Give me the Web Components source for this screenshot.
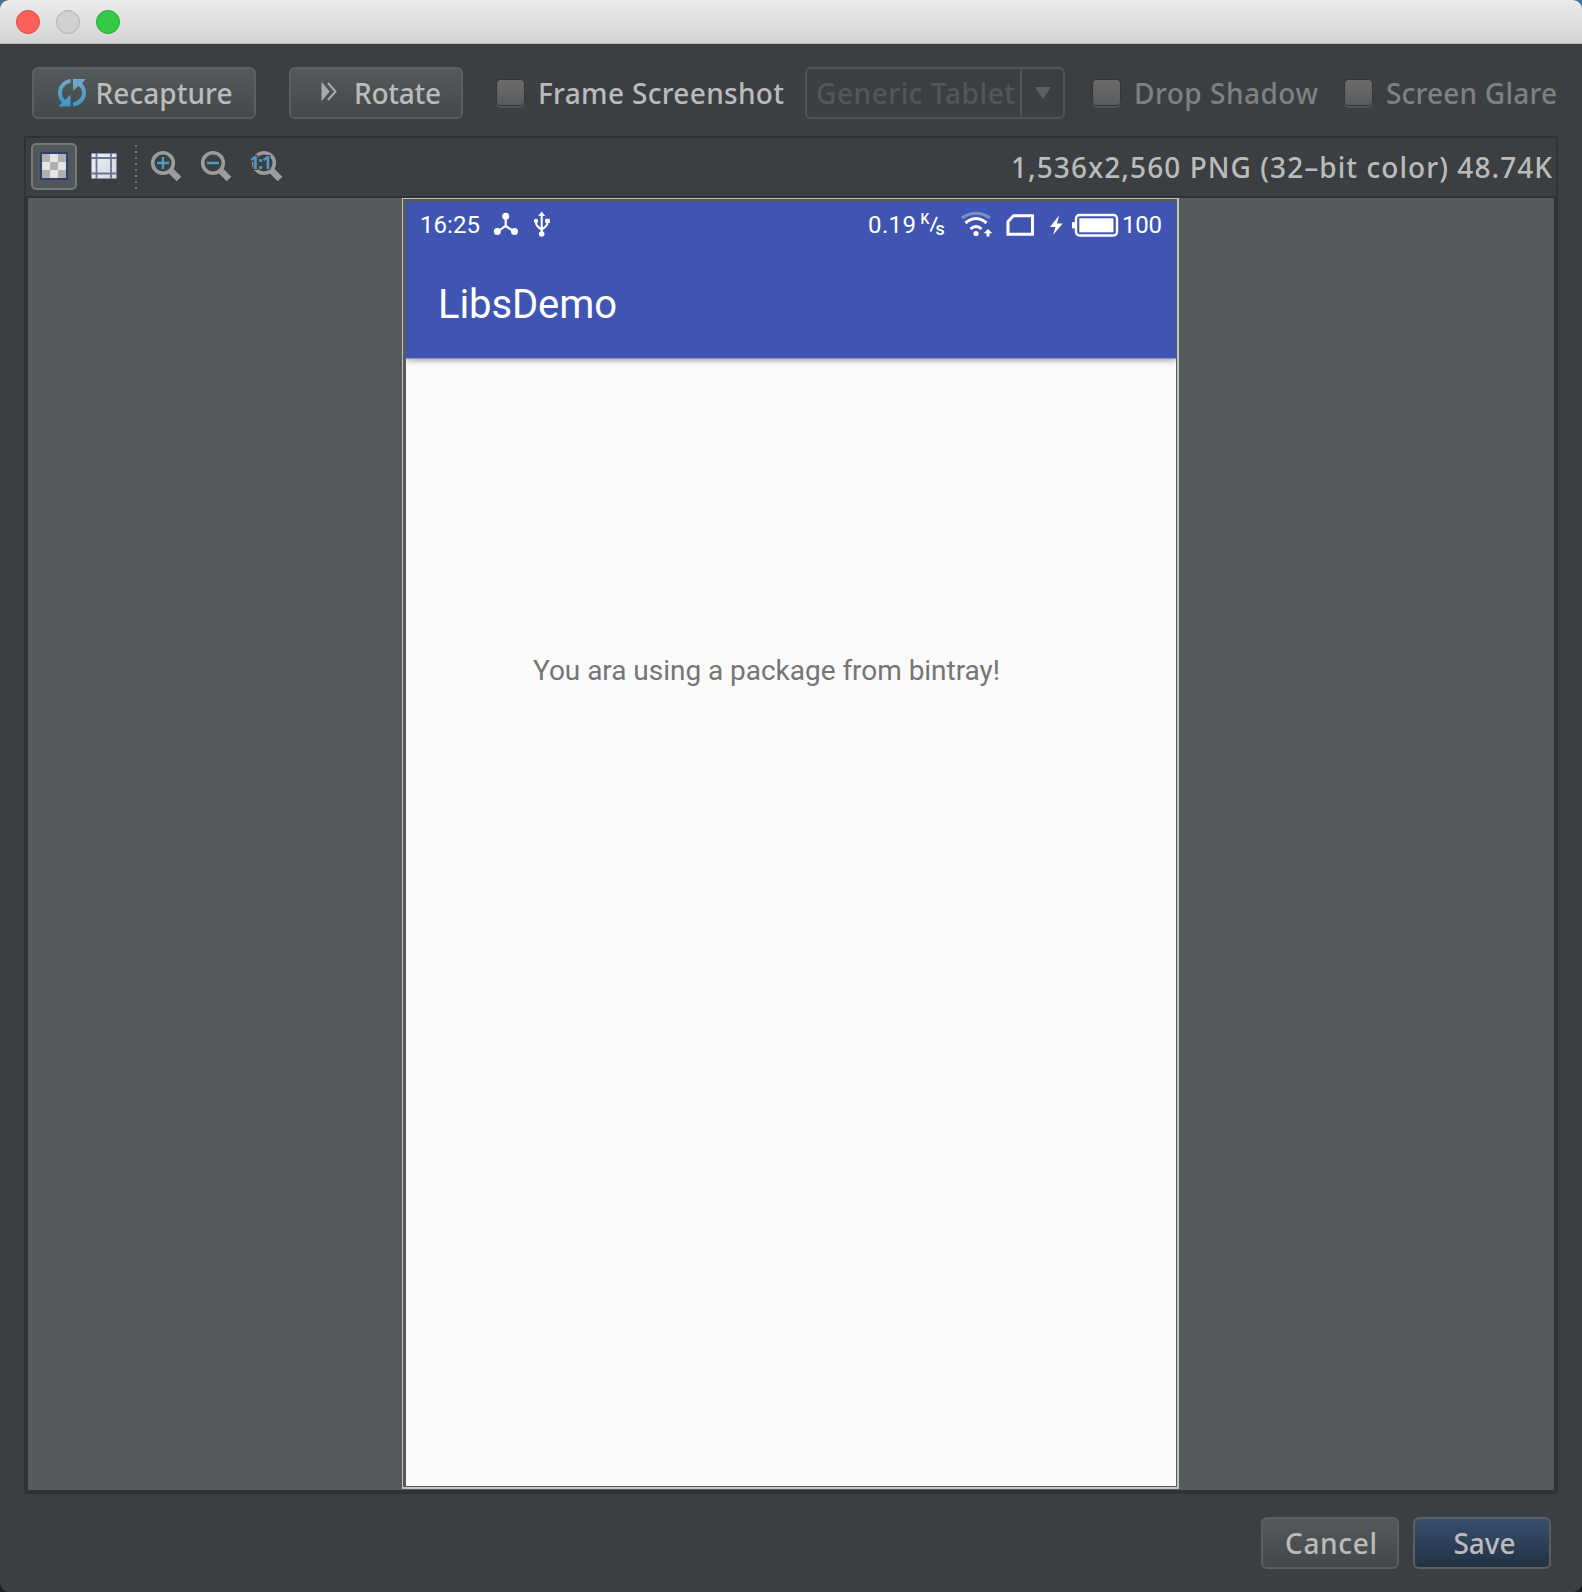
<!DOCTYPE html>
<html lang="en">
<head>
<meta charset="utf-8">
<title>Screenshot</title>
<style>
html,body{margin:0;height:100%}
body{background:linear-gradient(#43759c 0,#43759c 20px,#1c1d22 60px,#1c1d22);font-family:"Noto Sans","Open Sans",sans-serif;font-size:28px;font-weight:500;color:#bbb;overflow:hidden}
</style>
</head>
<body>
<capture-window></capture-window>
<script>
const define = (name, html, ready) => customElements.define(name, class extends HTMLElement {
  connectedCallback() {
    if (this.shadowRoot) return;
    const t = document.createElement('template');
    t.innerHTML = html;
    this.attachShadow({ mode: 'open' }).append(t.content.cloneNode(true));
    if (ready) ready(this, this.shadowRoot);
  }
});

/* One-line label tracked out (or in) to a given width */
define('fit-text', `<style>
:host{display:block;white-space:pre;flex:none;line-height:36px}
span{display:inline-block;white-space:pre}
</style><span><slot></slot></span>`, (el, root) => {
  const w = +el.getAttribute('w'), s = root.querySelector('span');
  const n = el.textContent.length;
  el.style.width = w + 'px';
  s.style.letterSpacing = ((w - s.getBoundingClientRect().width) / (n - 1)) + 'px';
});

define('title-bar', `<style>
:host{display:flex;align-items:center;gap:16px;height:44px;padding-left:16px;box-sizing:border-box;background:linear-gradient(#ebebeb,#d4d4d4);border-bottom:1px solid #b5b5b5;flex:none}
i{width:24px;height:24px;border-radius:50%;box-sizing:border-box;border:1px solid}
.r{background:#fd605b;border-color:#e2463f}.g{background:#d0d0d0;border-color:#b0b0b0}.z{background:#34ca49;border-color:#24ab35}
</style><i class="r"></i><i class="g"></i><i class="z"></i>`);

define('push-button', `<style>
:host{display:flex;align-items:center;box-sizing:border-box;height:52px;border:2px solid #5c5f61;border-radius:6px;background:linear-gradient(#54595b,#434849);flex:none}
:host([primary]){background:linear-gradient(#384f6f,#233143)}
</style><slot></slot>`);

define('check-box', `<style>
:host{display:flex;align-items:center;height:52px;flex:none}
:host([disabled]){color:#808080}
i{width:27px;height:25px;margin:-2px 14px 0 0;border-radius:4px;background:linear-gradient(#6b6b6b,#5b5b5b);box-shadow:0 0 0 1px #333536,0 2px 0 1px #515355}
</style><i></i><slot></slot>`);

define('combo-box', `<style>
:host{display:flex;box-sizing:border-box;height:52px;width:260px;border:2px solid #515355;border-radius:6px;color:#555657;flex:none}
div{display:flex;align-items:center;width:213px;padding-left:9px;box-sizing:border-box}
b{flex:1;border-left:2px solid #515355;display:flex;align-items:center;justify-content:center}
</style><div><slot></slot></div><b><svg width="16" height="12"><path d="M0 0H16L8 12Z" fill="#5d5f60"/></svg></b>`);

define('option-bar', `<style>
:host{display:flex;height:52px;margin:23px 0 17px;padding-left:31.500px;flex:none}
</style>
<push-button style="width:224px"><svg style="margin-left:24px" width="29" height="30" viewBox="0 0 29 30"><defs><linearGradient id="b" x2="0" y2="1"><stop stop-color="#71a9cb"/><stop offset="1" stop-color="#3f94c4"/></linearGradient></defs><g fill="url(#b)"><path d="M12.5 1C5 2 0 8 0 15c0 4 1.300 7 4 9.500L.500 28.500H12.500V16.500L7 22C5 20 4 18 4 15c0-4.500 3-9 8.500-10z"/><path d="M15 28.500C23 27.500 28 22 28 14.800c0-4-1.300-6.800-4-9.600L27.500 1H15V13L20.500 8c2.300 2 3.500 4 3.500 6.800 0 4.500-3.500 8.500-9 9.700z"/></g></svg><fit-text w="137" style="margin-left:9px;margin-top:-1px">Recapture</fit-text></push-button>
<push-button style="width:174px;margin-left:33.500px"><svg style="margin:-2px 0 0 30px" width="17" height="20" viewBox="0 0 17 20"><path d="M.500 0V19L8 9.500Z" fill="#aaa"/><path d="M1 .5L8.500 9.500 1 18.500Z" fill="#aaa"/><path d="M7 1L14.500 9.500 7 18" fill="none" stroke="#aaa" stroke-width="2"/></svg><fit-text w="87" style="margin-left:16px;margin-top:-1px">Rotate</fit-text></push-button>
<check-box style="margin-left:34px"><fit-text w="246" style="margin-top:-1px">Frame Screenshot</fit-text></check-box>
<combo-box style="margin-left:21px"><fit-text w="199" style="margin-top:-1px">Generic Tablet</fit-text></combo-box>
<check-box disabled style="margin-left:28px"><fit-text w="184" style="margin-top:-1px">Drop Shadow</fit-text></check-box>
<check-box disabled style="margin-left:27px"><fit-text w="171" style="margin-top:-1px">Screen Glare</fit-text></check-box>`);

define('zoom-tool', `<style>:host{display:block;width:34px;height:34px;flex:none}svg{display:block;overflow:visible}</style>
<svg width="34" height="34"><g fill="none"><circle cx="14" cy="14" r="10.300" stroke="#9c9c9c" stroke-width="3.600"/><path d="M22 22L30 30" stroke="#9c9c9c" stroke-width="6.500"/><path class="s" stroke="#4a9bc7" stroke-width="2.400"/></g><text x="-.5" y="20" font-family="Noto Sans" font-weight="700" font-size="17.500" letter-spacing="-1.200" fill="#4a9bc7" stroke="#3c3f41" stroke-width="2" paint-order="stroke"></text></svg>`, (el, root) => {
  const k = el.getAttribute('kind');
  if (k === 'fit') root.querySelector('text').textContent = '1:1';
  else { root.querySelector('text').remove(); root.querySelector('.s').setAttribute('d', k === 'in' ? 'M8 14H20M14 8V20' : 'M8 14H20'); }
});

define('image-toolbar', `<style>
:host{display:flex;align-items:center;height:58px;box-sizing:border-box;padding:0 4px 0 5px;border:solid #323232;border-width:0 2px;flex:none}
.on{width:46px;height:47px;margin-top:-1px;box-sizing:border-box;border:2px solid #74797b;border-radius:5px;background:#515658;display:flex;align-items:center;justify-content:center}
.on svg{margin:-1px 1px 0 0}
.dots{width:2px;height:44px;background:repeating-linear-gradient(#777a7c 0 2px,transparent 2px 6px)}
fit-text{margin-left:auto}
</style>
<div class="on"><svg width="28" height="28"><rect x="1" y="1" width="26" height="26" fill="#e4e4e4" stroke="#2b4272" stroke-width="2"/><path d="M2 2h8v8H2zM18 2h8v8h-8zM10 10h8v8h-8zM2 18h8v8H2zM18 18h8v8h-8z" fill="#b0b0b0"/></svg></div>
<svg width="26" height="26" style="margin:-2px 0 0 14px;flex:none"><defs><linearGradient id="g" x2="1" y2="1"><stop stop-color="#eef0f5"/><stop offset="1" stop-color="#d3d7e4"/></linearGradient></defs><rect x=".5" y=".5" width="25" height="25" fill="url(#g)"/><path d="M5.500 0V26M20 0V26M0 5H26M0 20.500H26" stroke="#68758f" stroke-width="1.800"/></svg>
<div class="dots" style="margin-left:18px;margin-right:12px"></div>
<zoom-tool kind="in" style="margin-top:-2px"></zoom-tool>
<zoom-tool kind="out" style="margin:-2px 0 0 16px"></zoom-tool>
<zoom-tool kind="fit" style="margin:-2px 0 0 17px"></zoom-tool>
<fit-text w="541">1,536x2,560 PNG (32–bit color) 48.74K</fit-text>`);

define('status-bar', `<style>
:host{display:flex;align-items:center;height:46px;font-size:24px;color:#fff}
svg{display:block;flex:none;overflow:visible}
</style>
<fit-text w="60" style="margin-left:14px">16:25</fit-text>
<svg style="margin-left:13px" width="26" height="26" viewBox="493 212 26 26"><path d="M505.700 216V226L497.300 231.700M505.700 226L514.300 231.700" stroke="#fff" stroke-width="2.200" fill="none"/><g fill="#fff"><circle cx="505.700" cy="216.200" r="3.500"/><circle cx="497.300" cy="231.500" r="3.500"/><circle cx="514.500" cy="231.500" r="3.500"/></g></svg>
<svg style="margin-left:13px" width="20" height="26" viewBox="532 212 20 26"><path d="M541.700 215V234M536 221v2q0 3 5.700 6.500q5.700-3.500 5.700-6.500v-2" stroke="#fff" stroke-width="2.100" fill="none"/><path d="M541.700 211.500l3.500 4.500h-7z" fill="#fff"/><circle cx="536" cy="221" r="2.200" fill="#fff"/><rect x="545.200" y="218.800" width="4.600" height="4.200" fill="#fff"/><circle cx="541.700" cy="234" r="2.800" fill="#fff"/></svg>
<fit-text w="48" style="margin-left:316px">0.19</fit-text>
<svg style="margin-left:4px" width="26" height="26" viewBox="920 212 26 26"><g fill="#fff" font-family="Roboto" font-weight="500"><text x="920.500" y="224" font-size="14">K</text><text x="935.500" y="234.500" font-size="18">s</text></g><path d="M937 217L930.500 231.500" stroke="#fff" stroke-width="1.900"/></svg>
<svg style="margin-left:15px" width="30" height="26" viewBox="961 211.500 30 26" fill="none" stroke="#fff" stroke-width="3"><path d="M962 217.500Q976 208 990 217.500" opacity=".33"/><path d="M965.500 222.500Q976 213.500 986.500 222.500M970.500 228.500Q976 223.500 981.500 228.500"/><circle cx="976" cy="233" r="2.600" fill="#fff" stroke="none"/><path d="M988 228.500l4.300 4.300h-2.800v3.200h-3v-3.200h-2.800z" fill="#fff" stroke="none"/></svg>
<svg style="margin-left:15px" width="28" height="24" viewBox="1006 212 28 24"><path d="M1013.500 214.800H1032.500V233.200H1008V220.500Z" fill="none" stroke="#fff" stroke-width="3"/></svg>
<svg style="margin-left:16px" width="13" height="20" viewBox="1050 214 13 20"><path d="M1059 214.500L1050 226h5.500l-2.500 8 9.700-11.500h-5.700z" fill="#fff"/></svg>
<svg style="margin-left:9px" width="46" height="24" viewBox="1072 212 46 24"><rect x="1076" y="214" width="41" height="20.500" rx="3.500" fill="none" stroke="#fff" stroke-width="2.400"/><rect x="1079.300" y="217.300" width="34.200" height="14" fill="#fff"/><rect x="1072" y="221" width="3" height="6.500" rx="1" fill="#fff"/></svg>
<fit-text w="40" style="margin-left:4px">100</fit-text>`);

define('device-screen', `<style>
:host{display:block;box-sizing:border-box;width:777px;height:1291px;border:solid #c3c3c3;border-width:1px 2px 2px 1px;padding:3px 1px 1px 3px;background:#555a5c}
.page{height:100%;background:#fafafa;font-family:Roboto,sans-serif;font-weight:400}
header{height:156px;background:#4055b2;color:#fff;box-shadow:0 1px 0 #8f94bb,0 2px 6px rgba(0,0,0,.4);clip-path:inset(0 0 -12px 0)}
h1{font-weight:400;font-size:40px;margin:0;padding:39px 0 0 32px}
p{margin:0;padding:295px 0 0 127px;color:#757575}
</style>
<div class="page"><header><status-bar></status-bar><h1><fit-text w="179">LibsDemo</fit-text></h1></header>
<p><fit-text w="467">You ara using a package from bintray!</fit-text></p></div>`);

define('image-canvas', `<style>
:host{display:flex;justify-content:flex-start;box-sizing:border-box;height:1298px;border:solid #323232;border-width:2px 4px 4px;background:#555a5c;padding-left:374px}
</style><device-screen></device-screen>`);

define('capture-window', `<style>
:host{display:flex;flex-direction:column;width:1582px;height:1592px;border-radius:9px;overflow:hidden;background:#3c3f41}
.panel{margin:0 24px;border-top:2px solid #323232}
footer{display:flex;justify-content:flex-end;margin:23px 31px 0 0;gap:14px}
push-button{justify-content:center}
</style>
<title-bar></title-bar><option-bar></option-bar>
<div class="panel"><image-toolbar></image-toolbar><image-canvas></image-canvas></div>
<footer><push-button style="width:138px"><fit-text w="92" style="margin:-1px 0 0 2px">Cancel</fit-text></push-button><push-button primary style="width:138px"><fit-text w="62" style="margin:-1px 0 0 5px">Save</fit-text></push-button></footer>`);
</script>
</body>
</html>
